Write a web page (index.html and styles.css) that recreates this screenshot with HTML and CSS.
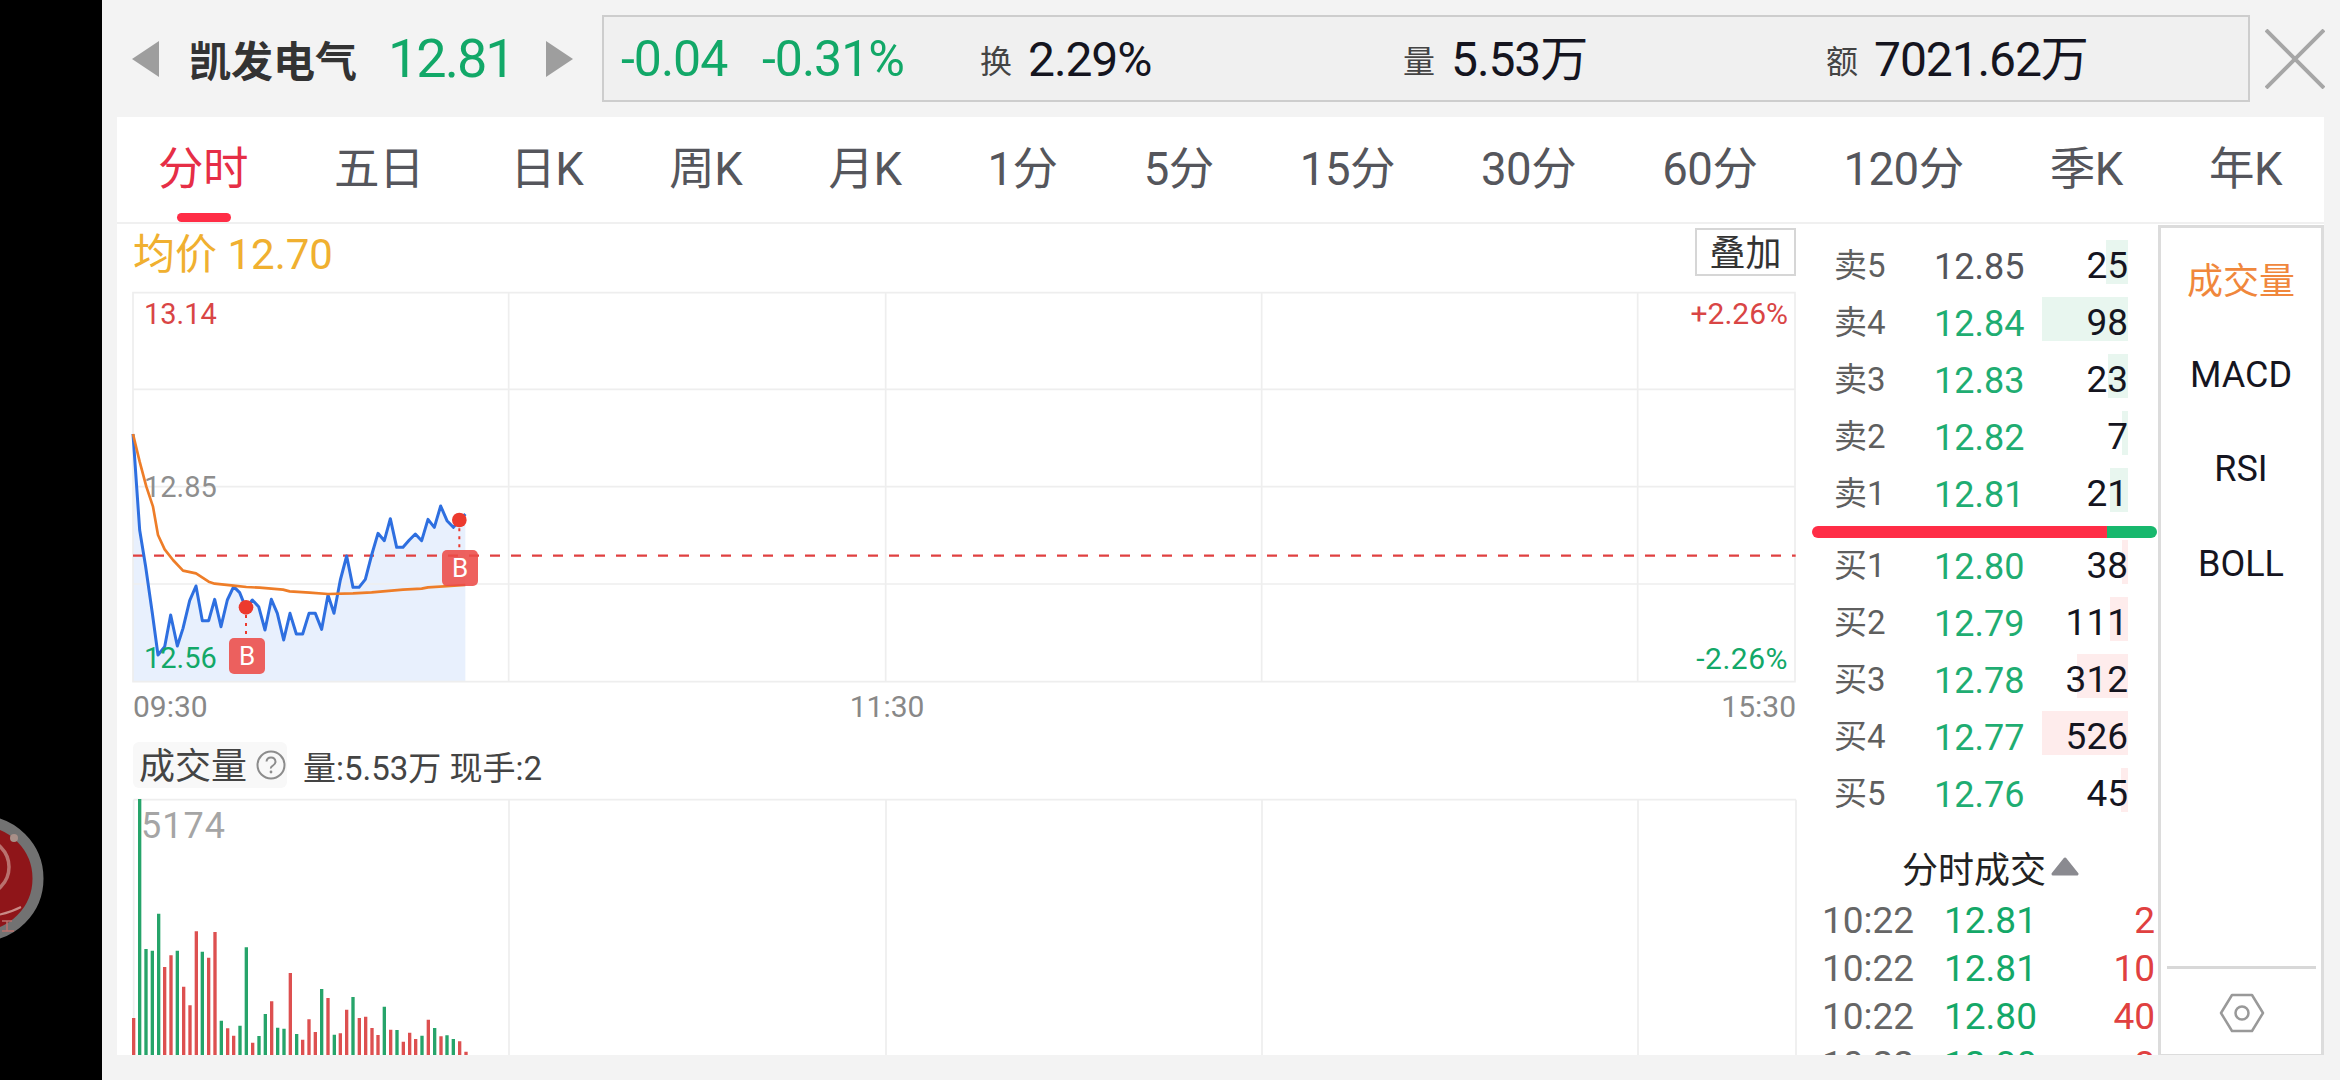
FILE: index.html
```html
<!DOCTYPE html>
<html lang="zh">
<head>
<meta charset="utf-8">
<title>凯发电气</title>
<link rel="stylesheet" href="styles.css">
</head>
<body>
<aside class="rail">
  <svg class="bubble" width="46" height="128" viewBox="0 0 46 128">
    <circle cx="-19.5" cy="63.5" r="57.5" fill="#8f1519" stroke="#727272" stroke-width="11"/>
    <circle cx="-19" cy="52" r="28" fill="none" stroke="#b9716e" stroke-width="3.5"/>
    <circle cx="14" cy="23" r="4" fill="#a98f88"/>
    <path d="M-10 101Q8 99 21 92" fill="none" stroke="#c98a86" stroke-width="2"/>
    <path d="M2 106H12M7 106V116M2 116H14" fill="none" stroke="#b9716e" stroke-width="1.5"/>
  </svg>
</aside>
<main class="app">
  <header class="top">
    <svg class="arrow" width="28" height="36" viewBox="0 0 28 36"><path d="M27 0V36L0 18Z" fill="#9e9e9e"/></svg>
    <span class="name">凯发电气</span>
    <span class="price">12.81</span>
    <svg class="arrow next" width="28" height="36" viewBox="0 0 28 36"><path d="M1 0V36L28 18Z" fill="#9e9e9e"/></svg>
    <div class="quote">
      <span class="chg a1">-0.04</span>
      <span class="chg a2">-0.31%</span>
      <span class="stat s1"><i>换</i>2.29%</span>
      <span class="stat s2"><i>量</i>5.53万</span>
      <span class="stat s3"><i>额</i>7021.62万</span>
    </div>
    <svg class="close" width="60" height="60" viewBox="0 0 60 60"><path d="M1 1L59 59M59 1L1 59" stroke="#a6a6a6" stroke-width="4" fill="none"/></svg>
  </header>
  <section class="panel">
    <nav class="tabs">
      <a class="tab on">分时</a><a class="tab">五日</a><a class="tab">日K</a><a class="tab">周K</a><a class="tab">月K</a><a class="tab">1分</a><a class="tab">5分</a><a class="tab">15分</a><a class="tab">30分</a><a class="tab">60分</a><a class="tab">120分</a><a class="tab">季K</a><a class="tab">年K</a>
    </nav>
    <div class="content">
      <div class="charts">
        <div class="avgrow"><span class="avg">均价 12.70</span><span class="overlay">叠加</span></div>
        <div class="pricechart">
          <svg class="plot" width="1663" height="391" viewBox="40 36 4989 1173">
            <path d="M40 1203V462L60 750 78 860 98 1000 115 1125 135 1100 153 1005 173 1098 190 1045 210 962 229 918 248 1022 267 1022 285 958 304 1040 323 960 342 920 360 938 379 985 398 960 417 980 436 1050 455 958 473 1000 492 1080 511 1000 530 1062 549 1062 568 1000 587 1000 606 1048 625 945 643 1000 662 900 681 828 700 922 718 922 737 898 756 825 775 760 794 782 812 716 831 802 850 802 869 780 887 762 906 782 925 718 944 742 963 678 982 722 1001 742 1020 722 1037 702V1203Z" fill="#e8f0fd"/>
            <path d="M40 38H5026V1205H40ZM40 328H5026M40 620H5026M40 912H5026M1167 38V1205M2298 38V1205M3426 38V1205M4554 38V1205" fill="none" stroke="#eeeeee" stroke-width="5"/>
            <path class="dash" d="M40 827H5028"/>
            <path class="blue" d="M40 462L60 750 78 860 98 1000 115 1125 135 1100 153 1005 173 1098 190 1045 210 962 229 918 248 1022 267 1022 285 958 304 1040 323 960 342 920 360 938 379 985 398 960 417 980 436 1050 455 958 473 1000 492 1080 511 1000 530 1062 549 1062 568 1000 587 1000 606 1048 625 945 643 1000 662 900 681 828 700 922 718 922 737 898 756 825 775 760 794 782 812 716 831 802 850 802 869 780 887 762 906 782 925 718 944 742 963 678 982 722 1001 742 1020 722 1037 702"/>
            <path class="orange" d="M40 462L60 545 80 620 100 680 115 765 135 808 160 840 190 872 229 880 267 905 285 911 342 917 380 921 420 923 490 929 510 934 570 938 625 942 700 940 756 937 850 929 906 926 925 922 1037 915"/>
            <path class="dots" d="M379 1005V1072M1019 745V812"/>
            <circle cx="379" cy="982" r="22" fill="#ec3a2e"/>
            <circle cx="1019" cy="720" r="22" fill="#ec3a2e"/>
          </svg>
          <span class="lab hi">13.14</span>
          <span class="lab mid">12.85</span>
          <span class="lab lo">12.56</span>
          <span class="lab up">+2.26%</span>
          <span class="lab dn">-2.26%</span>
          <span class="mark m1">B</span>
          <span class="mark m2">B</span>
        </div>
        <div class="times"><span>09:30</span><span class="t2">11:30</span><span>15:30</span></div>
        <div class="volhead">
          <span class="chip"><em>成交量</em><svg width="30" height="30" viewBox="0 0 30 30"><circle cx="15" cy="15" r="13.5" fill="none" stroke="#8c8c8c" stroke-width="2"/><path d="M10.5 11.5Q11 7.5 15 7.5T19.5 11.5Q19.5 14 17 15.5T15 18.5" fill="none" stroke="#8c8c8c" stroke-width="2"/><circle cx="15" cy="22" r="1.4" fill="#8c8c8c"/></svg></span>
          <span class="volinfo">量:5.53万 现手:2</span>
        </div>
        <div class="volchart">
          <svg class="plot vol" width="1680" height="256" viewBox="399 0 5040 768">
            <path d="M401 2H5388M401 2V768M1527 2V768M2658 2V768M3786 2V768M4914 2V768M5388 2V768" fill="none" stroke="#eeeeee" stroke-width="5"/>
            <path class="vr" d="M401 768V657M494 768V504M513 768V469M551 768V563M570 768V619M589 768V397M626 768V476M645 768V399M683 768V688M701 768V710M758 768V731M815 768V607M871 768V522M908 768V722M927 768V661M946 768V699M984 768V597M1021 768V703M1040 768V632M1078 768V657M1097 768V653M1116 768V687M1134 768V708M1172 768V692M1210 768V728M1229 768V701M1247 768V720M1285 768V662M1323 768V712M1379 768V727M1398 768V758"/>
            <path class="vg" d="M419 768V0M438 768V450M457 768V455M476 768V344M532 768V455M607 768V458M664 768V665M720 768V680M739 768V445M777 768V711M796 768V645M833 768V686M852 768V689M890 768V705M965 768V570M1003 768V707M1059 768V594M1153 768V623M1191 768V693M1266 768V710M1304 768V687M1341 768V709M1360 768V720"/>
          </svg>
          <span class="maxvol">5174</span>
        </div>
      </div>
      <div class="book">
        <div class="rows">
          <div class="row"><span class="lbl">卖5</span><span class="prc flat">12.85</span><span class="qty"><b class="bar sell w22"></b>25</span></div>
          <div class="row"><span class="lbl">卖4</span><span class="prc">12.84</span><span class="qty"><b class="bar sell w86"></b>98</span></div>
          <div class="row"><span class="lbl">卖3</span><span class="prc">12.83</span><span class="qty"><b class="bar sell w20"></b>23</span></div>
          <div class="row"><span class="lbl">卖2</span><span class="prc">12.82</span><span class="qty"><b class="bar sell w6"></b>7</span></div>
          <div class="row"><span class="lbl">卖1</span><span class="prc">12.81</span><span class="qty"><b class="bar sell w18"></b>21</span></div>
        </div>
        <div class="ratio"><span class="rb"></span><span class="rg"></span></div>
        <div class="rows buy">
          <div class="row"><span class="lbl">买1</span><span class="prc">12.80</span><span class="qty"><b class="bar bid w6"></b>38</span></div>
          <div class="row"><span class="lbl">买2</span><span class="prc">12.79</span><span class="qty"><b class="bar bid w18"></b>111</span></div>
          <div class="row"><span class="lbl">买3</span><span class="prc">12.78</span><span class="qty"><b class="bar bid w51"></b>312</span></div>
          <div class="row"><span class="lbl">买4</span><span class="prc">12.77</span><span class="qty"><b class="bar bid w86"></b>526</span></div>
          <div class="row"><span class="lbl">买5</span><span class="prc">12.76</span><span class="qty"><b class="bar bid w7"></b>45</span></div>
        </div>
        <div class="tradehead">分时成交<svg width="28" height="20" viewBox="0 0 28 20"><path d="M14 2L26 17H2Z" fill="#8a8a90" stroke="#8a8a90" stroke-width="3" stroke-linejoin="round"/></svg></div>
        <div class="trades">
          <div class="trade"><span class="tm">10:22</span><span class="tp">12.81</span><span class="tv">2</span></div>
          <div class="trade"><span class="tm">10:22</span><span class="tp">12.81</span><span class="tv">10</span></div>
          <div class="trade"><span class="tm">10:22</span><span class="tp">12.80</span><span class="tv">40</span></div>
          <div class="trade"><span class="tm">10:22</span><span class="tp">12.80</span><span class="tv">8</span></div>
        </div>
      </div>
      <aside class="side">
        <a class="ind active">成交量</a>
        <a class="ind">MACD</a>
        <a class="ind">RSI</a>
        <a class="ind">BOLL</a>
        <div class="gear">
          <svg width="46" height="40" viewBox="0 0 46 40"><path d="M13 2H33L44 20 33 38H13L2 20Z" fill="none" stroke="#999" stroke-width="2.5" stroke-linejoin="round"/><circle cx="23" cy="20" r="6.5" fill="none" stroke="#999" stroke-width="2.5"/></svg>
        </div>
      </aside>
    </div>
  </section>
</main>
</body>
</html>
```
FILE: styles.css
```css
* { box-sizing: border-box; }
html, body { margin: 0; height: 100%; }
body {
  width: 2340px; height: 1080px; overflow: hidden; display: flex; background: #000;
  font-family: Roboto, "Noto Sans CJK SC", sans-serif; color: #111;
}
i, b, em { font-style: normal; font-weight: normal; }

.rail { width: 102px; flex: none; position: relative; background: #000; }
.bubble { position: absolute; left: 0; top: 815px; }

.app { flex: 1; display: flex; flex-direction: column; background: #f3f3f3; padding: 0 16px 25px 15px; min-width: 0; }

.top { height: 117px; flex: none; display: flex; align-items: center; position: relative; }
.arrow { flex: none; margin-left: 15px; }
.name { font: 700 42px "Noto Sans CJK SC", sans-serif; color: #333; margin-left: 29px; width: 167px; white-space: nowrap; }
.price { font-size: 54px; letter-spacing: -2px; color: #12a868; margin-left: 32px; width: 122px; white-space: nowrap; }
.arrow.next { margin-left: 35px; }
.quote { position: absolute; left: 485px; top: 15px; width: 1648px; height: 87px; background: #f0f0f0; border: 2px solid #cdcdcd; }
.quote span { position: absolute; top: 0; line-height: 85px; white-space: nowrap; }
.chg { color: #12a868; font-size: 50px; letter-spacing: -1px; }
.a1 { left: 17px; }
.a2 { left: 158px; }
.stat { color: #15151f; font-size: 48px; letter-spacing: -1.1px; }
.stat i { font-size: 32px; color: #444; margin-right: 16px; letter-spacing: 0; vertical-align: 3px; }
.s1 { left: 376px; }
.s2 { left: 799px; }
.s3 { left: 1222px; }
.close { position: absolute; left: 2148px; top: 29px; }

.panel { flex: 1; min-height: 0; background: #fff; display: flex; flex-direction: column; overflow: hidden; }

.tabs { height: 107px; flex: none; display: flex; justify-content: space-between; align-items: center; padding: 0 42px 0 41px; border-bottom: 2px solid #f0f0f0; }
.tab { font-size: 45.5px; line-height: 60px; letter-spacing: -0.5px; color: #55565c; white-space: nowrap; position: relative; }
.tab.on { color: #e62e46; }
.tab.on::after { content: ""; position: absolute; left: 19px; bottom: -22px; width: 54px; height: 9px; border-radius: 5px; background: #ff2d46; }

.content { flex: 1; min-height: 0; display: flex; }

.charts { width: 1679px; flex: none; padding-left: 16px; display: flex; flex-direction: column; }
.avgrow { height: 68px; flex: none; display: flex; justify-content: space-between; align-items: flex-start; }
.avg { font-size: 42px; color: #f0b030; margin-top: 6px; line-height: 50px; }
.overlay { width: 101px; height: 48px; margin-top: 4px; border: 2px solid #d6d6d6; font-size: 36px; line-height: 49px; text-align: center; color: #333; }

.pricechart { height: 391px; flex: none; position: relative; }
.plot { display: block; position: absolute; left: 0; top: 0; overflow: visible; }
.blue { fill: none; stroke: #2e6fe0; stroke-width: 9; stroke-linejoin: round; }
.orange { fill: none; stroke: #ee7d28; stroke-width: 8; stroke-linejoin: round; }
.dash { fill: none; stroke: #e04040; stroke-width: 7; stroke-dasharray: 30 33; }
.dots { fill: none; stroke: #ec3a2e; stroke-width: 6; stroke-dasharray: 9 15; }

.lab { position: absolute; font-size: 29px; line-height: 34px; white-space: nowrap; }
.hi { left: 11px; top: 5px; color: #d94545; }
.mid { left: 11px; top: 178px; color: #8e8e8e; }
.lo { left: 11px; top: 349px; color: #12a868; }
.up { right: 8px; top: 5px; color: #d94545; font-size: 30px; }
.dn { right: 8px; top: 350px; color: #12a868; font-size: 30px; letter-spacing: .5px; }
.mark { position: absolute; width: 36px; height: 36px; border-radius: 5px; background: rgba(236, 75, 72, .88); color: #fff; font-size: 26px; line-height: 36px; text-align: center; }
.m1 { left: 96px; top: 346px; }
.m2 { left: 309px; top: 258px; }

.times { height: 57px; flex: none; display: flex; justify-content: space-between; align-items: flex-start; font-size: 30px; line-height: 40px; color: #888; padding-top: 4px; }
.t2 { margin-left: 642px; margin-right: auto; }

.volhead { height: 59px; flex: none; display: flex; align-items: flex-start; }
.chip { width: 154px; height: 46px; margin-top: 2px; background: #f8f8f8; border-radius: 6px; font-size: 36px; color: #444; padding-left: 6px; display: flex; align-items: center; gap: 9px; white-space: nowrap; }
.chip em { line-height: 46px; margin-top: 4px; }
.chip svg { flex: none; }
.volinfo { font-size: 33px; line-height: 46px; margin-top: 6px; margin-left: 16px; color: #444; white-space: nowrap; }

.volchart { flex: 1; min-height: 0; position: relative; }
.vr { stroke: #dd5050; stroke-width: 10; fill: none; }
.vg { stroke: #26a46a; stroke-width: 10; fill: none; }
.maxvol { position: absolute; left: 8px; top: 6px; font-size: 36px; line-height: 42px; color: #a5a5a5; letter-spacing: 1px; }

.book { width: 362px; flex: none; display: flex; flex-direction: column; overflow: hidden; }
.rows { padding-top: 14px; }
.rows.buy { padding-top: 0; }
.row { height: 57px; display: flex; align-items: center; font-size: 36px; position: relative; padding-left: 38px; }
.lbl { width: 101px; font-size: 33px; line-height: 44px; margin-bottom: 1px; color: #5f5f5f; white-space: nowrap; }
.prc { width: 100px; color: #1fad72; margin-left: -1px; }
.prc.flat { color: #54555b; }
.qty { position: absolute; right: 30px; top: 6px; height: 44px; line-height: 44px; font-size: 37px; color: #15151f; text-align: right; min-width: 10px; z-index: 0; }
.bar { position: absolute; right: 0; top: -4px; height: 44px; z-index: -1; }
.sell { background: #e8f6ef; }
.bid { background: #feecec; }
.w6 { width: 6px; } .w7 { width: 7px; } .w18 { width: 18px; } .w20 { width: 20px; } .w22 { width: 22px; } .w51 { width: 51px; } .w86 { width: 86px; }

.ratio { height: 12px; flex: none; margin: 3px 1px 0 16px; display: flex; border-radius: 6px; overflow: hidden; }
.rb { width: 295px; background: #ff2d46; }
.rg { flex: 1; background: #17b86d; }

.tradehead { height: 59px; margin-top: 14px; flex: none; display: flex; align-items: center; padding-left: 106px; gap: 5px; font-size: 36px; color: #222; white-space: nowrap; }
.trades { flex: none; }
.trade { height: 48px; display: flex; align-items: center; font-size: 37px; position: relative; padding-left: 26px; }
.tm { width: 122px; color: #666; }
.tp { color: #14a868; }
.tv { position: absolute; right: 3px; color: #e04040; }

.side { width: 166px; flex: none; height: 831px; margin-top: 1px; border: 3px solid #dcdcdc; border-bottom-width: 2px; display: flex; flex-direction: column; align-items: center; position: relative; background: #fff; }
.ind { height: 94.5px; display: flex; align-items: center; font-size: 36px; color: #15151f; white-space: nowrap; flex: none; margin-top: 3px; margin-bottom: -3px; }
.ind.active { color: #f0873c; margin-top: 3px; margin-bottom: -1px; }
.gear { position: absolute; left: 6px; right: 5px; top: 738px; height: 90px; border-top: 3px solid #d8d8d8; display: flex; align-items: center; justify-content: center; }
```
